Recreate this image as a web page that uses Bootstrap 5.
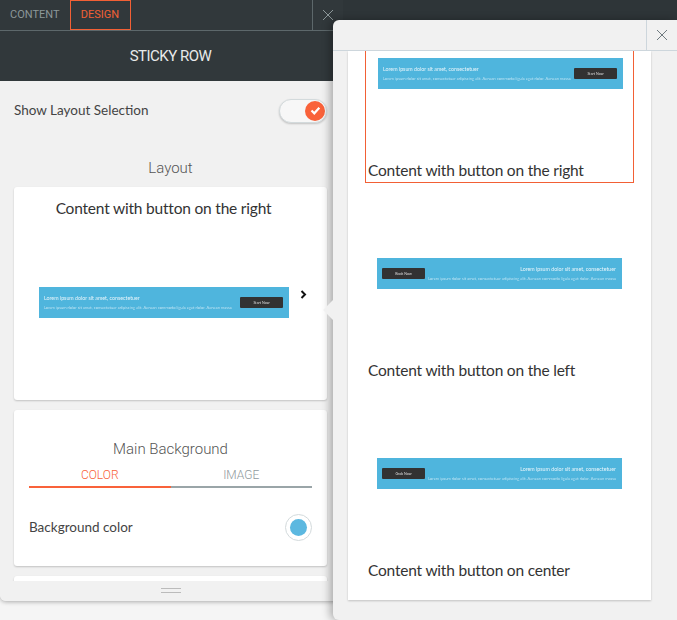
<!DOCTYPE html>
<html lang="en">
<head>
<meta charset="utf-8">
<title>Sticky Row</title>
<link rel="stylesheet" href="https://cdn.jsdelivr.net/npm/bootstrap@5.3.0/dist/css/bootstrap.min.css">
<style>
html,body{height:620px;overflow:hidden}
body{background:#f5f5f5;font-family:"Lato","Liberation Sans",sans-serif;position:relative;color:#333}
.stage{height:620px}
.side{width:343px;height:601px;background:#f1f1f1;border-radius:0 0 6px 6px;box-shadow:0 1px 4px rgba(0,0,0,.3);flex:none;overflow:hidden}
.darkstrip{height:20px;background:#2e3538}
.tabbar{height:31px;background:#31383b;border-bottom:1px solid #5d686b}
.tabitem{font:400 11px/30px Roboto,sans-serif;color:#8c9799;padding:0 10px;height:30px}
.tabon{color:#f26035;border:1px solid #f26035;line-height:28px;width:61px;padding:0;text-align:center;flex:none}
.closecell{width:31px;height:30px;border-left:1px solid #5d686b;margin-left:auto}
.titlebar{height:50px;background:#31383b;color:#e8eaea;font:400 15px/50px Roboto,sans-serif;letter-spacing:-.5px;text-align:center;padding-right:2px}
.sidebody{padding:0 16px 0 14px;height:520px;position:relative;overflow:hidden}
.showrow{height:58px;font:400 13.5px/58px "Lato",sans-serif;color:#444}
.toggle{width:48px;height:24px;border-radius:12px;background:#f7f7f7;border:1px solid #d3dadc;box-shadow:0 1px 2px rgba(0,0,0,.2);padding:1px;margin-top:1px}
.knob{width:20px;height:20px;border-radius:50%;background:#f9623a}
.lighthead{font:300 15px/20px Roboto,sans-serif;color:#555;text-align:center}
.layoutcap{margin-top:19px;margin-bottom:9px}
.panelcard{background:#fff;border-radius:3px;box-shadow:0 1px 2px rgba(0,0,0,.2)}
.cardone{height:213px;padding:9px 0 0;margin-bottom:10px}
.cardtitle{font:400 15.5px/24px "Lato",sans-serif;color:#333;text-align:center;letter-spacing:-.2px;padding-right:14px}
.thumbrow{margin-top:67px;padding-left:25px}
.chev{margin-left:11px;margin-top:-16px}
.thumbbar{height:31px;width:250px;background:#4fb5dd;color:#e8f5fb;filter:blur(.55px);padding:0 6px 0 5px;flex:none}
.thumbbar.narrow{width:245px}
.t1{font:400 5.3px/7px "Lato",sans-serif}
.t2{font:300 4.1px/6px "Lato",sans-serif;margin-top:3px;white-space:nowrap}
.tbtn{width:43px;height:11px;background:#323232;color:#ddd;font:400 3.6px/11px "Lato",sans-serif;text-align:center;flex:none;border-radius:1px}
.cardtwo{height:156px;padding:29px 15px 0;margin-bottom:10px}
.subtabs{margin-top:6px}
.subtab{width:50%;font:300 12px/20px Roboto,sans-serif;text-align:center;color:#8f9a9d;border-bottom:2px solid #9aa5a8;height:23px}
.subtab.act{color:#f9623a;border-bottom-color:#f9623a}
.colorrow{margin-top:25px;font:400 13.5px/27px "Lato",sans-serif;color:#444}
.colorlabel{padding-top:1px}
.swatch{width:27px;height:27px;border-radius:50%;border:1px solid #d3dadc;background:#fff;padding:4px}
.swatchin{width:17px;height:17px;border-radius:50%;background:#5cb8e0}
.cardthree{height:40px}
.handlebar{height:20px;background:#f1f1f1;position:absolute;left:0;right:0;bottom:0;padding-right:1px}
.grip{width:20px;height:5px;border-top:1px solid #bbb;border-bottom:1px solid #bbb;margin:7px auto 0}
.popover-panel{position:absolute;left:333px;top:20px;width:344px;height:600px;background:#f1f1f1;border-radius:6px 0 0 6px;box-shadow:-3px 0 8px rgba(0,0,0,.3)}
.popnotch{position:absolute;left:-7px;top:283px;width:14px;height:14px;background:#f1f1f1;transform:rotate(45deg)}
.pophead{height:31px;border-bottom:1px solid #cdd6dc}
.popclose{width:31px;height:30px;border-left:1px solid #cdd6dc;margin-left:auto}
.poplist{width:303px;height:549px;margin-left:15px;background:#fff;box-shadow:0 1px 2px rgba(0,0,0,.2);overflow:hidden;padding:0 17px}
.optitem{border:1px solid transparent;font:400 15.5px/24px "Lato",sans-serif;color:#333;padding:0 2px;letter-spacing:-.2px}
.optfirst{height:132px;border-color:#f26035;border-top:0;margin-bottom:17px;padding-top:7px}
.optnext{height:183px;margin-bottom:17px;padding-top:57px}
.optbar{margin-left:10px;letter-spacing:0}
.optnext .optbar{margin-left:9px}
.revtext{text-align:right}
</style>
</head>
<body>
<div class="stage d-flex">
  <aside class="side d-flex flex-column">
    <div class="tabbar d-flex">
      <div class="tabitem">CONTENT</div>
      <div class="tabitem tabon">DESIGN</div>
      <div class="closecell d-flex align-items-center justify-content-center">
        <svg width="12" height="12" viewBox="0 0 12 12"><path d="M1 1l10 10M11 1L1 11" stroke="#8c9799" fill="none"/></svg>
      </div>
    </div>
    <div class="titlebar">STICKY ROW</div>
    <div class="sidebody">
      <div class="showrow d-flex justify-content-between align-items-center">
        <span>Show Layout Selection</span>
        <div class="toggle d-flex justify-content-end">
          <div class="knob d-flex align-items-center justify-content-center">
            <svg width="11" height="9" viewBox="0 0 11 9"><path d="M1.5 4.5l2.8 2.8 5-5.5" stroke="#fff" stroke-width="2.2" fill="none"/></svg>
          </div>
        </div>
      </div>
      <div class="lighthead layoutcap">Layout</div>
      <div class="panelcard cardone">
        <div class="cardtitle">Content with button on the right</div>
        <div class="thumbrow d-flex align-items-center">
          <div class="thumbbar d-flex align-items-center justify-content-between">
            <div><div class="t1">Lorem ipsum dolor sit amet, consectetuer</div><div class="t2">Lorem ipsum dolor sit amet, consectetuer adipiscing elit. Aenean commodo ligula eget dolor. Aenean massa</div></div>
            <div class="tbtn">Start Now</div>
          </div>
          <svg class="chev" width="7" height="9" viewBox="0 0 7 9"><path d="M1.5 1l3.5 3.5L1.5 8" stroke="#111" stroke-width="2" fill="none"/></svg>
        </div>
      </div>
      <div class="panelcard cardtwo">
        <div class="lighthead">Main Background</div>
        <div class="subtabs d-flex">
          <div class="subtab act">COLOR</div>
          <div class="subtab">IMAGE</div>
        </div>
        <div class="colorrow d-flex justify-content-between align-items-center">
          <span class="colorlabel">Background color</span>
          <div class="swatch"><div class="swatchin"></div></div>
        </div>
      </div>
      <div class="panelcard cardthree"></div>
      <div class="handlebar"><div class="grip"></div></div>
    </div>
  </aside>
  <div class="flex-grow-1"><div class="darkstrip"></div></div>
</div>
<section class="popover-panel">
  <div class="popnotch"></div>
  <div class="pophead d-flex position-relative">
    <div class="popclose d-flex align-items-center justify-content-center">
      <svg width="12" height="12" viewBox="0 0 12 12"><path d="M1 1l10 10M11 1L1 11" stroke="#6f7a7f" fill="none"/></svg>
    </div>
  </div>
  <div class="poplist">
    <div class="optitem optfirst d-flex flex-column justify-content-between">
      <div class="thumbbar narrow optbar d-flex align-items-center justify-content-between">
        <div><div class="t1">Lorem ipsum dolor sit amet, consectetuer</div><div class="t2">Lorem ipsum dolor sit amet, consectetuer adipiscing elit. Aenean commodo ligula eget dolor. Aenean massa</div></div>
        <div class="tbtn">Start Now</div>
      </div>
      <div>Content with button on the right</div>
    </div>
    <div class="optitem optnext d-flex flex-column justify-content-between">
      <div class="thumbbar narrow optbar d-flex align-items-center justify-content-between">
        <div class="tbtn">Book Now</div>
        <div class="revtext"><div class="t1">Lorem ipsum dolor sit amet, consectetuer</div><div class="t2">Lorem ipsum dolor sit amet, consectetuer adipiscing elit. Aenean commodo ligula eget dolor. Aenean massa</div></div>
      </div>
      <div>Content with button on the left</div>
    </div>
    <div class="optitem optnext d-flex flex-column justify-content-between">
      <div class="thumbbar narrow optbar d-flex align-items-center justify-content-between">
        <div class="tbtn">Grab Now</div>
        <div class="revtext"><div class="t1">Lorem ipsum dolor sit amet, consectetuer</div><div class="t2">Lorem ipsum dolor sit amet, consectetuer adipiscing elit. Aenean commodo ligula eget dolor. Aenean massa</div></div>
      </div>
      <div>Content with button on center</div>
    </div>
  </div>
</section>
<script src="https://cdn.jsdelivr.net/npm/bootstrap@5.3.0/dist/js/bootstrap.bundle.min.js"></script>
</body>
</html>
